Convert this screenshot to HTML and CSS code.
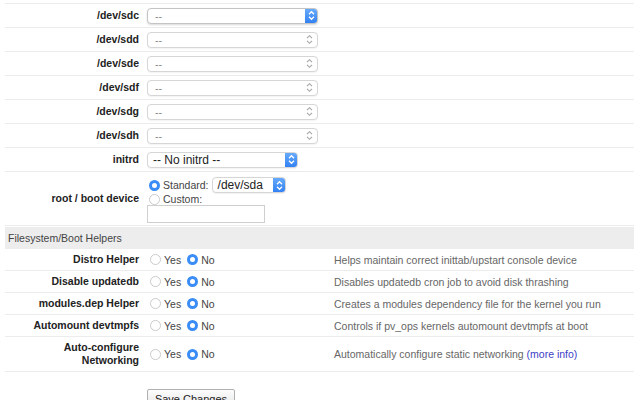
FILE: index.html
```html
<!DOCTYPE html>
<html>
<head>
<meta charset="utf-8">
<link rel="stylesheet" href="styles.css">
</head>
<body>
<div class="page">
  <div class="form">
    <div class="row"><div class="label">/dev/sdc</div><div class="ctl"><div class="select wide focus"><span>--</span><span class="arrowbox"><svg width="7" height="11" viewBox="0 0 7 11"><path d="M1 4.2L3.5 1.7L6 4.2M1 6.8L3.5 9.3L6 6.8" fill="none" stroke="#fff" stroke-width="1.3"/></svg></span></div></div></div>
    <div class="row"><div class="label">/dev/sdd</div><div class="ctl"><div class="select wide"><span>--</span><svg class="step" width="7" height="11" viewBox="0 0 7 11"><path d="M1 4.2L3.5 1.7L6 4.2M1 6.8L3.5 9.3L6 6.8" fill="none" stroke="#a5a5a5" stroke-width="1.1"/></svg></div></div></div>
    <div class="row"><div class="label">/dev/sde</div><div class="ctl"><div class="select wide"><span>--</span><svg class="step" width="7" height="11" viewBox="0 0 7 11"><path d="M1 4.2L3.5 1.7L6 4.2M1 6.8L3.5 9.3L6 6.8" fill="none" stroke="#a5a5a5" stroke-width="1.1"/></svg></div></div></div>
    <div class="row"><div class="label">/dev/sdf</div><div class="ctl"><div class="select wide"><span>--</span><svg class="step" width="7" height="11" viewBox="0 0 7 11"><path d="M1 4.2L3.5 1.7L6 4.2M1 6.8L3.5 9.3L6 6.8" fill="none" stroke="#a5a5a5" stroke-width="1.1"/></svg></div></div></div>
    <div class="row"><div class="label">/dev/sdg</div><div class="ctl"><div class="select wide"><span>--</span><svg class="step" width="7" height="11" viewBox="0 0 7 11"><path d="M1 4.2L3.5 1.7L6 4.2M1 6.8L3.5 9.3L6 6.8" fill="none" stroke="#a5a5a5" stroke-width="1.1"/></svg></div></div></div>
    <div class="row"><div class="label">/dev/sdh</div><div class="ctl"><div class="select wide"><span>--</span><svg class="step" width="7" height="11" viewBox="0 0 7 11"><path d="M1 4.2L3.5 1.7L6 4.2M1 6.8L3.5 9.3L6 6.8" fill="none" stroke="#a5a5a5" stroke-width="1.1"/></svg></div></div></div>
    <div class="row"><div class="label">initrd</div><div class="ctl"><div class="select mid dark"><span>-- No initrd --</span><span class="arrowbox"><svg width="7" height="11" viewBox="0 0 7 11"><path d="M1 4.2L3.5 1.7L6 4.2M1 6.8L3.5 9.3L6 6.8" fill="none" stroke="#fff" stroke-width="1.3"/></svg></span></div></div></div>
    <div class="row root"><div class="label">root / boot device</div>
      <div class="ctl stack">
        <div class="line"><span class="radio on"></span><span class="rtext">Standard:</span><div class="select small dark"><span>/dev/sda</span><span class="arrowbox"><svg width="7" height="11" viewBox="0 0 7 11"><path d="M1 4.2L3.5 1.7L6 4.2M1 6.8L3.5 9.3L6 6.8" fill="none" stroke="#fff" stroke-width="1.3"/></svg></span></div></div>
        <div class="line short"><span class="radio"></span><span class="rtext">Custom:</span></div>
        <div class="textbox"></div>
      </div>
    </div>
  </div>
  <div class="section">Filesystem/Boot Helpers</div>
  <div class="form2">
    <div class="row h"><div class="label">Distro Helper</div><div class="ctl opts"><span class="radio"></span><span class="rtext yes">Yes</span><span class="radio on"></span><span class="rtext">No</span></div><div class="desc">Helps maintain correct inittab/upstart console device</div></div>
    <div class="row h"><div class="label">Disable updatedb</div><div class="ctl opts"><span class="radio"></span><span class="rtext yes">Yes</span><span class="radio on"></span><span class="rtext">No</span></div><div class="desc">Disables updatedb cron job to avoid disk thrashing</div></div>
    <div class="row h"><div class="label">modules.dep Helper</div><div class="ctl opts"><span class="radio"></span><span class="rtext yes">Yes</span><span class="radio on"></span><span class="rtext">No</span></div><div class="desc">Creates a modules dependency file for the kernel you run</div></div>
    <div class="row h"><div class="label">Automount devtmpfs</div><div class="ctl opts"><span class="radio"></span><span class="rtext yes">Yes</span><span class="radio on"></span><span class="rtext">No</span></div><div class="desc">Controls if pv_ops kernels automount devtmpfs at boot</div></div>
    <div class="row tall"><div class="label">Auto-configure<br>Networking</div><div class="ctl opts"><span class="radio"></span><span class="rtext yes">Yes</span><span class="radio on"></span><span class="rtext">No</span></div><div class="desc">Automatically configure static networking <a class="more" href="#">(more info)</a></div></div>
  </div>
  <div class="actions"><button class="btn" type="button">Save Changes</button></div>
</div>
</body>
</html>
```
FILE: styles.css
```css
html, body {
  margin: 0;
  padding: 0;
  background: #fff;
}
body {
  font-family: "Liberation Sans", Arial, Helvetica, sans-serif;
  font-size: 10.5px;
  color: #222;
}
.page {
  width: 629px;
  padding: 3px 0 0 5px;
}
.form {
  border-top: 1px solid #ececec;
}
.row {
  display: flex;
  align-items: center;
  height: 23px;
  border-bottom: 1px solid #ececec;
}
.label {
  flex: 0 0 142px;
  box-sizing: border-box;
  padding-right: 8px;
  text-align: right;
  font-weight: bold;
  color: #222;
  line-height: 13px;
}
.ctl {
  display: flex;
  align-items: center;
}
.select {
  box-sizing: border-box;
  height: 16px;
  border: 1px solid #d6d6d6;
  border-radius: 4px;
  background: #fff;
  display: flex;
  align-items: center;
  justify-content: space-between;
  padding-left: 7px;
  color: #888;
  box-shadow: 0 1px 1px rgba(0,0,0,0.05);
  overflow: hidden;
}
.select.dark { color: #222; font-size: 12px; padding-left: 5px; }
.select.wide { width: 171px; }
.select.mid { width: 151px; }
.select.small { width: 74px; }
.select.focus { border-color: #c4c4c4; box-shadow: 0 1px 2px rgba(0,0,0,0.15); }
.step { margin-right: 4px; }
.arrowbox {
  width: 13px;
  height: 16px;
  margin: -1px -1px -1px 0;
  background: linear-gradient(#6aadfc, #2f7ef2);
  border-radius: 0 4px 4px 0;
  display: flex;
  align-items: center;
  justify-content: center;
}
.row.root {
  height: 53px;
}
.stack {
  flex-direction: column;
  align-items: flex-start;
  align-self: flex-start;
  padding-top: 5px;
}
.line {
  display: flex;
  align-items: center;
  height: 16px;
  padding-left: 2px;
}
.line.short { height: 12px; }
.radio {
  box-sizing: border-box;
  width: 11px;
  height: 11px;
  border-radius: 50%;
  border: 1px solid #cbcbcb;
  background: #fff;
  flex: 0 0 auto;
}
.radio.on {
  border: 3px solid #3a8df7;
  background: #fff;
}
.rtext {
  margin-left: 3px;
  color: #444;
  font-size: 10.5px;
}
.line .rtext { margin-right: 3px; }
.textbox {
  width: 118px;
  height: 18px;
  box-sizing: border-box;
  border: 1px solid #cfcfcf;
  background: #fff;
}
.section {
  margin-top: 1px;
  height: 22px;
  line-height: 22px;
  background: #ededed;
  padding-left: 3px;
  color: #444;
}
.row.h { height: 21px; }
.row.tall { height: 34px; }
.opts {
  flex: 0 0 187px;
  padding-left: 3px;
  box-sizing: border-box;
}
.opts .yes { margin-right: 6px; }
.desc {
  color: #666;
}
.more {
  color: #4040c8;
  text-decoration: none;
}
.actions {
  padding: 17px 0 0 142px;
}
.btn {
  width: 88px;
  height: 20px;
  border: 1px solid #b0b0b0;
  border-radius: 2px;
  background: linear-gradient(#fdfdfd, #e4e4e4);
  font-family: "Liberation Sans", Arial, sans-serif;
  font-size: 11px;
  color: #222;
  padding: 0;
}
```
